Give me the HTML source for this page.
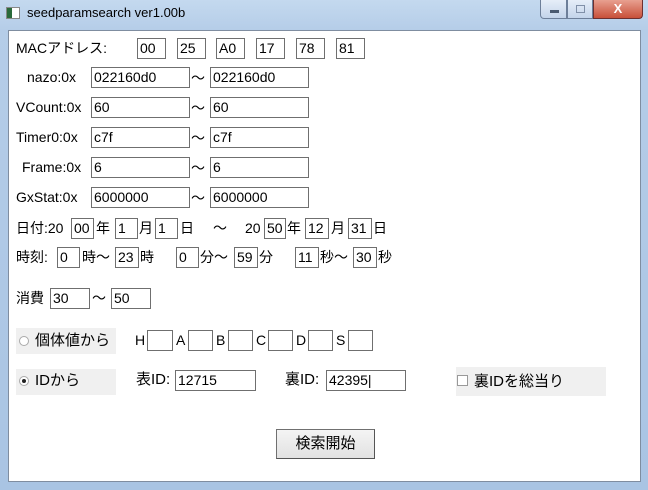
<!DOCTYPE html><html><head><meta charset="utf-8"><style>
*{margin:0;padding:0;box-sizing:border-box}
body{width:648px;height:490px;overflow:hidden;background:linear-gradient(#c4d9ef,#b5cde8 30px,#a9c4e3);font-family:"Liberation Sans","Noto Sans CJK JP",sans-serif;font-size:14px;color:#000;position:relative}
.c{position:absolute;left:8px;top:30px;width:633px;height:452px;background:#fff;border:1px solid #7f8da0}
.a{position:absolute;white-space:nowrap;line-height:20px}
.b{position:absolute;border:1px solid #6f6f6f;background:#fff;height:21px;line-height:19px;padding-left:2px;font-size:14px;white-space:nowrap}
.g{position:absolute;background:#f0f0f0}
</style></head><body>
<div style="position:absolute;left:6px;top:7px;width:14px;height:12px;background:linear-gradient(90deg,#2a6a3a 40%,#fff 40%);border:1px solid #888"></div>
<div class="a" style="left:27px;top:3px;font-size:13px">seedparamsearch ver1.00b</div>
<div style="position:absolute;left:540px;top:0;width:27px;height:19px;border:1px solid #6d7f99;border-top:none;border-radius:0 0 0 4px;background:linear-gradient(#e6eef8,#c3d4ea)"><div style="position:absolute;left:9px;top:10px;width:9px;height:3px;background:#4a5a70"></div></div>
<div style="position:absolute;left:567px;top:0;width:26px;height:19px;border:1px solid #6d7f99;border-top:none;background:linear-gradient(#e6eef8,#c3d4ea)"><div style="position:absolute;left:8px;top:5px;width:9px;height:8px;border:1px solid #8090a8"></div></div>
<div style="position:absolute;left:593px;top:0;width:50px;height:19px;border:1px solid #6d3030;border-top:none;border-radius:0 0 4px 0;background:linear-gradient(#e8a090,#c8503a);color:#fff;font-weight:bold;text-align:center;line-height:17px;font-size:13px">X</div>
<div class="c"></div>
<div class="a" style="left:16px;top:38px">MACアドレス:</div>
<div class="b" style="left:137px;top:38px;width:29px">00</div>
<div class="b" style="left:177px;top:38px;width:29px">25</div>
<div class="b" style="left:216px;top:38px;width:29px">A0</div>
<div class="b" style="left:256px;top:38px;width:29px">17</div>
<div class="b" style="left:296px;top:38px;width:29px">78</div>
<div class="b" style="left:336px;top:38px;width:29px">81</div>
<div class="a" style="left:27px;top:67px">nazo:0x</div>
<div class="b" style="left:91px;top:67px;width:99px">022160d0</div><div class="a" style="left:191px;top:68px">～</div><div class="b" style="left:210px;top:67px;width:99px">022160d0</div>
<div class="a" style="left:16px;top:97px">VCount:0x</div>
<div class="b" style="left:91px;top:97px;width:99px">60</div><div class="a" style="left:191px;top:98px">～</div><div class="b" style="left:210px;top:97px;width:99px">60</div>
<div class="a" style="left:16px;top:127px">Timer0:0x</div>
<div class="b" style="left:91px;top:127px;width:99px">c7f</div><div class="a" style="left:191px;top:128px">～</div><div class="b" style="left:210px;top:127px;width:99px">c7f</div>
<div class="a" style="left:22px;top:157px">Frame:0x</div>
<div class="b" style="left:91px;top:157px;width:99px">6</div><div class="a" style="left:191px;top:158px">～</div><div class="b" style="left:210px;top:157px;width:99px">6</div>
<div class="a" style="left:16px;top:187px">GxStat:0x</div>
<div class="b" style="left:91px;top:187px;width:99px">6000000</div><div class="a" style="left:191px;top:188px">～</div><div class="b" style="left:210px;top:187px;width:99px">6000000</div>
<div class="a" style="left:16px;top:218px">日付:20</div>
<div class="b" style="left:71px;top:218px;width:23px">00</div><div class="a" style="left:96px;top:218px">年</div>
<div class="b" style="left:115px;top:218px;width:23px">1</div><div class="a" style="left:139px;top:218px">月</div>
<div class="b" style="left:155px;top:218px;width:23px">1</div><div class="a" style="left:180px;top:218px">日</div>
<div class="a" style="left:213px;top:218px">～</div>
<div class="a" style="left:245px;top:218px">20</div>
<div class="b" style="left:264px;top:218px;width:22px">50</div><div class="a" style="left:287px;top:218px">年</div>
<div class="b" style="left:305px;top:218px;width:24px">12</div><div class="a" style="left:331px;top:218px">月</div>
<div class="b" style="left:348px;top:218px;width:24px">31</div><div class="a" style="left:373px;top:218px">日</div>
<div class="a" style="left:16px;top:247px">時刻:</div>
<div class="b" style="left:57px;top:247px;width:23px">0</div><div class="a" style="left:82px;top:247px">時～</div>
<div class="b" style="left:115px;top:247px;width:24px">23</div><div class="a" style="left:140px;top:247px">時</div>
<div class="b" style="left:176px;top:247px;width:23px">0</div><div class="a" style="left:200px;top:247px">分～</div>
<div class="b" style="left:234px;top:247px;width:24px">59</div><div class="a" style="left:259px;top:247px">分</div>
<div class="b" style="left:295px;top:247px;width:24px">11</div><div class="a" style="left:320px;top:247px">秒～</div>
<div class="b" style="left:353px;top:247px;width:24px">30</div><div class="a" style="left:378px;top:247px">秒</div>
<div class="a" style="left:16px;top:288px">消費</div>
<div class="b" style="left:50px;top:288px;width:40px">30</div><div class="a" style="left:92px;top:288px">～</div>
<div class="b" style="left:111px;top:288px;width:40px">50</div>
<div class="g" style="left:16px;top:328px;width:100px;height:26px"></div>
<div style="position:absolute;left:19px;top:336px;width:10px;height:10px;border:1px solid #aaa;border-radius:50%;background:#fff"></div>
<div class="a" style="left:35px;top:331px;font-size:15px">個体値から</div>
<div class="a" style="left:135px;top:330px">H</div><div class="b" style="left:147px;top:330px;width:26px"></div>
<div class="a" style="left:176px;top:330px">A</div><div class="b" style="left:188px;top:330px;width:25px"></div>
<div class="a" style="left:216px;top:330px">B</div><div class="b" style="left:228px;top:330px;width:25px"></div>
<div class="a" style="left:256px;top:330px">C</div><div class="b" style="left:268px;top:330px;width:25px"></div>
<div class="a" style="left:296px;top:330px">D</div><div class="b" style="left:308px;top:330px;width:25px"></div>
<div class="a" style="left:336px;top:330px">S</div><div class="b" style="left:348px;top:330px;width:25px"></div>
<div class="g" style="left:16px;top:369px;width:100px;height:26px"></div>
<div style="position:absolute;left:19px;top:376px;width:10px;height:10px;border:1px solid #aaa;border-radius:50%;background:#fff"><div style="position:absolute;left:2px;top:2px;width:4px;height:4px;border-radius:50%;background:#222"></div></div>
<div class="a" style="left:35px;top:371px;font-size:15px">IDから</div>
<div class="a" style="left:136px;top:370px;font-size:15px">表ID:</div>
<div class="b" style="left:175px;top:370px;width:81px">12715</div>
<div class="a" style="left:285px;top:370px;font-size:15px">裏ID:</div>
<div class="b" style="left:326px;top:370px;width:80px">42395|</div>
<div class="g" style="left:456px;top:367px;width:150px;height:29px"></div>
<div style="position:absolute;left:457px;top:375px;width:11px;height:11px;border:1px solid #999;background:#fff"></div>
<div class="a" style="left:474px;top:372px;font-size:15px">裏IDを総当り</div>
<div style="position:absolute;left:276px;top:429px;width:99px;height:30px;border:1px solid #707070;border-right-color:#555;border-bottom-color:#555;background:linear-gradient(#f4f4f4,#e2e2e2);text-align:center;line-height:28px;font-size:15px">検索開始</div>
</body></html>
